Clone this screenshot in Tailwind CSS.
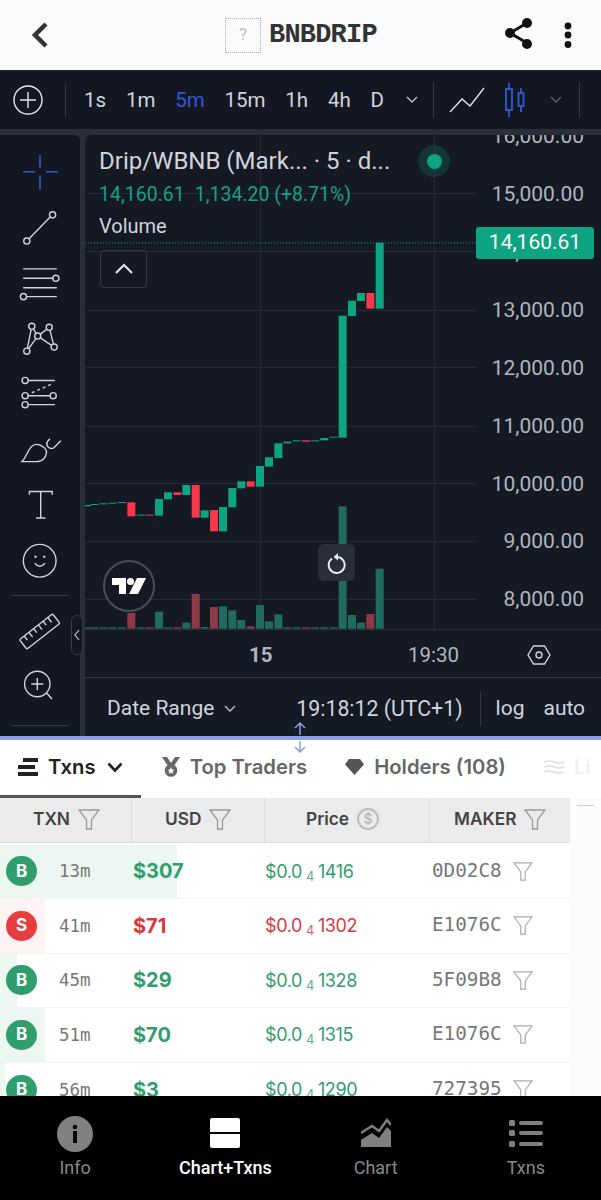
<!DOCTYPE html>
<html lang="en">
<head>
<meta charset="UTF-8">
<title>BNBDRIP</title>
<script src="https://cdn.jsdelivr.net/npm/@tailwindcss/browser@4"></script>
</head>
<body class="bg-white">
<div class="relative flex h-[1200px] w-[601px] flex-col overflow-hidden font-['Roboto',sans-serif]">

  <!-- Header -->
  <header class="flex h-[71px] shrink-0 items-center border-b border-[#222] bg-[#fbfbfb]">
    <svg class="ml-[30px]" width="20" height="30" viewBox="0 0 20 30" fill="none" stroke="#333" stroke-width="4.5" stroke-linejoin="miter"><path d="M16 4 L5 15 L16 26"/></svg>
    <div class="ml-[175px] flex h-[35px] w-[36px] items-center justify-center border border-dotted border-[#aaa] text-[17px] text-[#bbb]">?</div>
    <div class="ml-[8px] w-[108px] font-['Liberation_Mono',monospace] text-[27px] font-bold tracking-[-0.8px] text-[#333]">BNBDRIP</div>
    <svg class="ml-[126px]" width="34" height="36" viewBox="0 0 34 36" fill="#111" stroke="#111" stroke-width="3"><path d="M24 6 L7 16 L24 26" fill="none"/><circle cx="24" cy="6" r="3.5"/><circle cx="7" cy="16" r="3.5"/><circle cx="24" cy="27" r="3.5"/></svg>
    <svg class="ml-[26px]" width="10" height="30" viewBox="0 0 10 30" fill="#111"><circle cx="5" cy="6" r="3.4"/><circle cx="5" cy="15" r="3.4"/><circle cx="5" cy="24.5" r="3.4"/></svg>
  </header>

  <!-- Chart toolbar -->
  <div class="flex h-[58px] shrink-0 items-center bg-[#131722] text-[20.5px] text-[#d1d4dc]">
    <svg class="ml-[13px]" width="30" height="30" viewBox="0 0 30 30" fill="none" stroke="#e6e8ee" stroke-width="1.4"><circle cx="15" cy="15" r="14"/><path d="M15 7 V23 M7 15 H23"/></svg>
    <div class="ml-[22px] mr-[18px] h-[33px] w-px bg-[#363a45]"></div>
    <div class="flex items-center gap-[19.8px]">
      <span>1s</span><span>1m</span><span class="text-[#3058d6]">5m</span><span>15m</span><span>1h</span><span>4h</span><span>D</span>
    </div>
    <svg class="ml-[21px]" width="14" height="10" viewBox="0 0 14 10" fill="none" stroke="#c4c7d0" stroke-width="1.3"><path d="M2 2 L7 7 L12 2"/></svg>
    <div class="ml-[14px] h-[36px] w-px bg-[#363a45]"></div>
    <svg class="ml-[15px]" width="36" height="28" viewBox="0 0 36 28" fill="none" stroke="#e6e8ee" stroke-width="1.3"><path d="M1 26 L13 13 L21 20 L35 2"/></svg>
    <svg class="ml-[19px]" width="22" height="36" viewBox="0 0 22 36" fill="none" stroke="#2f5bd8" stroke-width="1.8"><rect x="2" y="7" width="6" height="21"/><path d="M5 1 V7 M5 28 V35"/><rect x="14.5" y="11" width="5" height="13"/><path d="M17 6 V11 M17 24 V30"/></svg>
    <svg class="ml-[23px]" width="14" height="10" viewBox="0 0 14 10" fill="none" stroke="#5e626d" stroke-width="1.3"><path d="M2 2 L7 7 L12 2"/></svg>
    <div class="ml-[16px] h-[36px] w-px bg-[#363a45]"></div>
  </div>

  <!-- Tools + chart -->
  <div class="relative flex h-[607px] shrink-0 bg-[#2a2e39] pt-[6px]">
    <div class="flex w-[80px] flex-col items-center rounded-tr-[6px] bg-[#131722] pt-[9px]">
      <svg class="h-[55.5px] w-[48px] shrink-0" viewBox="0 0 48 56" fill="none" stroke="#2f5bd8" stroke-width="1.6"><path d="M24 11 V24 M24 32 V46 M7 28 H19 M30 28 H42"/></svg>
      <svg class="h-[55.5px] w-[48px] shrink-0" viewBox="0 0 48 56" fill="none" stroke="#d1d4dc" stroke-width="1.4"><path d="M34.5 17 L13 39"/><circle cx="36.7" cy="15" r="3.1"/><circle cx="10.7" cy="41.4" r="3.1"/></svg>
      <svg class="h-[55.5px] w-[48px] shrink-0" viewBox="0 0 48 56" fill="none" stroke="#d1d4dc" stroke-width="1.4"><path d="M7 14 H41 M7 23.5 H37 M7 33 H41 M10.5 42 H41"/><circle cx="40" cy="23.5" r="3.1"/><circle cx="7.3" cy="42" r="3.1"/></svg>
      <svg class="h-[55.5px] w-[48px] shrink-0" viewBox="0 0 48 56" fill="none" stroke="#d1d4dc" stroke-width="1.4"><path d="M15.7 15.4 L10.7 40.6 L21.7 25.3 L15.7 15.4 M21.7 25.3 L33.3 16.5 L38.3 36.4 L21.7 25.3"/><circle cx="15.7" cy="15.4" r="3.1" fill="#131722"/><circle cx="33.3" cy="16.5" r="3.1" fill="#131722"/><circle cx="21.7" cy="25.3" r="3.1" fill="#131722"/><circle cx="10.7" cy="40.6" r="3.1" fill="#131722"/><circle cx="38.3" cy="36.4" r="3.1" fill="#131722"/></svg>
      <svg class="h-[55.5px] w-[48px] shrink-0" viewBox="0 0 48 56" fill="none" stroke="#d1d4dc" stroke-width="1.4"><path d="M12 14.6 H39 M12 30 H34 M12 39 H39"/><path d="M15.7 27 L37.3 17.6" stroke-dasharray="3 3"/><circle cx="9" cy="14.6" r="3.1"/><circle cx="9" cy="30" r="3.1"/><circle cx="37.3" cy="30" r="3.1"/><circle cx="9" cy="39" r="3.1"/></svg>
      <svg class="h-[55.5px] w-[48px] shrink-0" viewBox="0 0 48 56" fill="none" stroke="#d1d4dc" stroke-width="1.4"><path d="M5.7 40 H20 C27 40 31 35 30.5 29 C27 23 20 21 16.5 24 C11 28 11 35 5.7 40 Z"/><path d="M34 17 Q29 21 32 25 Q35 28 38 26 L45 19"/></svg>
      <svg class="h-[55.5px] w-[48px] shrink-0" viewBox="0 0 48 56" fill="none" stroke="#d1d4dc" stroke-width="1.4"><path d="M13.3 18 V14.6 H36.3 V18 M24.7 14.6 V41.4 M20 41.4 H29.5"/></svg>
      <svg class="h-[55.5px] w-[48px] shrink-0" viewBox="0 0 48 56" fill="none" stroke="#d1d4dc" stroke-width="1.4"><circle cx="23.7" cy="28" r="16.5"/><path d="M18.7 30.5 Q23.7 36.5 29 30.5"/><circle cx="19.5" cy="24" r="1.2" fill="#d1d4dc" stroke="none"/><circle cx="28.3" cy="24" r="1.2" fill="#d1d4dc" stroke="none"/></svg>
      <div class="mt-[7px] h-px w-[56px] bg-[#363a45]"></div>
      <svg class="mt-[9px] h-[53px] w-[48px] shrink-0" viewBox="0 0 48 53" fill="none" stroke="#d1d4dc" stroke-width="1.4"><g transform="translate(23.7 26.5) rotate(-38)"><rect x="-21" y="-6" width="42" height="12" rx="1.5"/><path d="M-15 -6 V-1 M-9 -6 V0 M-3 -6 V-1 M3 -6 V0 M9 -6 V-1 M15 -6 V0"/></g></svg>
      <svg class="h-[53px] w-[48px] shrink-0" viewBox="0 0 48 53" fill="none" stroke="#d1d4dc" stroke-width="1.4"><circle cx="21.3" cy="26" r="12.7"/><path d="M21.3 20 V32 M15.3 26 H27.3 M30.5 35 L36 41"/></svg>
      <div class="mt-[14px] h-px w-[56px] bg-[#363a45]"></div>
    </div>

    <div class="ml-[5px] flex w-[516px] flex-col rounded-tl-[6px] bg-[#151924]">
      <div class="relative flex h-[495px] shrink-0 overflow-hidden border-b border-[#2a2e39]">
        <svg id="plot" class="h-[495px] w-[391px] shrink-0" viewBox="85 135 391 495"></svg>
        <div class="flex w-[125px] shrink-0 flex-col items-end pr-[17px] text-[21px] text-[#b2b5be]">
          <div class="-mt-[27px] flex h-[58px] items-center">16,000.00</div>
          <div class="flex h-[58px] items-center">15,000.00</div>
          <div class="flex h-[58px] items-center">14,000.00</div>
          <div class="flex h-[58px] items-center">13,000.00</div>
          <div class="flex h-[58px] items-center">12,000.00</div>
          <div class="flex h-[58px] items-center">11,000.00</div>
          <div class="flex h-[58px] items-center">10,000.00</div>
          <div class="flex h-[58px] items-center">9,000.00</div>
          <div class="flex h-[58px] items-center">8,000.00</div>
        </div>

        <!-- Legend and overlays on the chart -->
        <div class="absolute left-[14px] top-[11px] w-[300px] text-[#d1d4dc]">
          <div class="text-[24px] leading-[30px]">Drip/WBNB (Mark... · 5 · d...</div>
          <div class="mt-[6px] flex gap-[10px] text-[19.5px] leading-[26px] text-[#17a184]"><span>14,160.61</span><span>1,134.20 (+8.71%)</span></div>
          <div class="mt-[5px] text-[20px] leading-[26px]">Volume</div>
        </div>
        <div class="absolute left-[333px] top-[10px] flex h-[32px] w-[32px] items-center justify-center rounded-full bg-[#0ca481]/20"><div class="h-[15px] w-[15px] rounded-full bg-[#0ca481]"></div></div>
        <div class="absolute left-[391px] top-[92px] flex h-[32px] w-[118px] items-center justify-center rounded-[3px] bg-[#0ca481] text-[21px] text-white">14,160.61</div>
        <div class="absolute left-[15px] top-[115px] flex h-[38px] w-[47px] items-center justify-center rounded-[4px] border border-[#363a45]">
          <svg width="20" height="12" viewBox="0 0 20 12" fill="none" stroke="#e6e8ee" stroke-width="2"><path d="M2 10 L10 2 L18 10"/></svg>
        </div>
        <div class="absolute left-[18px] top-[425px] flex h-[52px] w-[52px] items-center justify-center rounded-full border-2 border-[#4a4e58] bg-[#151924]">
          <svg width="34" height="18" viewBox="0 0 34 18" fill="#fff"><path d="M0 1 H14 V17 H7 V8 H0 Z"/><circle cx="18.5" cy="4.5" r="3.5"/><path d="M25 1 H34 L26 17 H17 Z"/></svg>
        </div>
        <div class="absolute left-[233px] top-[409px] flex h-[37px] w-[37px] items-center justify-center rounded-[6px] bg-[#2a2e39]">
          <svg width="22" height="22" viewBox="0 0 22 22" fill="none" stroke="#e6e8ee" stroke-width="2"><path d="M6 6.5 A8 8 0 1 0 11 5 "/><path d="M12 1 L7.5 5 L12 8.5" fill="#e6e8ee" stroke="none"/></svg>
        </div>
      </div>

      <!-- Time axis -->
      <div class="flex h-[48px] shrink-0 items-center border-b border-[#363a45] pl-[164px] pt-[3px] text-[20.5px] text-[#b2b5be]">
        <span class="w-[23px] font-bold">15</span>
        <span class="ml-[136px]">19:30</span>
        <svg class="ml-[68px]" width="24" height="24" viewBox="0 0 24 24" fill="none" stroke="#d1d4dc" stroke-width="1.4"><path d="M6.5 3 H17.5 L23 12 L17.5 21 H6.5 L1 12 Z"/><circle cx="12" cy="12" r="3"/></svg>
      </div>

      <!-- Date range bar -->
      <div class="flex flex-1 items-center pl-[22px] pt-[3px] text-[21px] text-[#d1d4dc]">
        <span>Date Range</span>
        <svg class="ml-[9px]" width="14" height="10" viewBox="0 0 14 10" fill="none" stroke="#c4c7d0" stroke-width="1.3"><path d="M2 2 L7 7 L12 2"/></svg>
        <span class="ml-[59px] text-[21.3px]">19:18:12 (UTC+1)</span>
        <div class="ml-[17px] h-[34px] w-px bg-[#363a45]"></div>
        <span class="ml-[15px]">log</span>
        <span class="ml-[19px]">auto</span>
      </div>
    </div>

    <!-- Collapse handle for the tools -->
    <div class="absolute left-[71px] top-[486px] flex h-[40px] w-[12px] items-center justify-center rounded-[6px] border border-[#363a45] bg-[#131722]">
      <svg width="6" height="12" viewBox="0 0 6 12" fill="none" stroke="#c4c7d0" stroke-width="1.2"><path d="M5 1 L1 6 L5 11"/></svg>
    </div>
  </div>

  <!-- Resize bar -->
  <div class="h-[4px] shrink-0 bg-[#8c9fe6]"></div>
  <svg class="absolute left-[293px] top-[722px] z-10" width="14" height="32" viewBox="0 0 14 32" fill="none" stroke="#8c9fe6" stroke-width="1.5"><path d="M7 1 V13 M2 6 L7 1 L12 6 M7 19 V30 M2 25 L7 30 L12 25"/></svg>

  <!-- Tabs -->
  <div class="relative flex h-[58px] shrink-0 items-center bg-white pb-[4px] font-['Inter',sans-serif] text-[20.3px] font-semibold">
    <div class="absolute bottom-0 left-0 h-[3px] w-[141px] bg-[#555]"></div>
    <svg class="ml-[18px]" width="20" height="18" viewBox="0 0 20 18" fill="#222"><rect x="5" y="0" width="15" height="4"/><rect x="0" y="7" width="17" height="4"/><rect x="0" y="14" width="20" height="4"/></svg>
    <span class="ml-[10px] text-[#222]">Txns</span>
    <svg class="ml-[11px]" width="16" height="11" viewBox="0 0 16 11" fill="none" stroke="#222" stroke-width="2.6"><path d="M1.5 1.5 L8 8.5 L14.5 1.5"/></svg>
    <svg class="ml-[38px]" width="20" height="20" viewBox="0 0 20 20"><path d="M1 0 H6 L10 6 L14 0 H19 L13 9 H7 Z" fill="#666"/><circle cx="10" cy="13.5" r="6.3" fill="#666"/><path d="M10 10 L11 12.6 L13.4 12.8 L11.6 14.4 L12.2 17 L10 15.6 L7.8 17 L8.4 14.4 L6.6 12.8 L9 12.6 Z" fill="#fff"/></svg>
    <span class="ml-[9px] text-[#666]">Top Traders</span>
    <svg class="ml-[38px]" width="19" height="16" viewBox="0 0 19 16" fill="#555"><path d="M4 0 H15 L19 5.5 L9.5 16 L0 5.5 Z"/></svg>
    <span class="ml-[10px] text-[#666]">Holders (108)</span>
    <svg class="ml-[38px]" width="20" height="15" viewBox="0 0 20 15" fill="none" stroke="#ddd" stroke-width="1.5"><path d="M0 2 Q5 0 10 2 T20 2 M0 7 Q5 5 10 7 T20 7 M0 12 Q5 10 10 12 T20 12"/></svg>
    <span class="ml-[10px] text-[#f0f0f0]">Li</span>
  </div>

  <!-- Transactions table -->
  <div class="flex min-h-0 flex-1 overflow-hidden bg-[#fbfbfb]">
    <div class="w-[570px] shrink-0 bg-white">
      <div class="mb-[1.5px] flex h-[45px] items-center border-b border-[#ddd] bg-[#ebebeb] font-['Inter',sans-serif] text-[17.3px] font-semibold text-[#444]">
        <div class="flex h-full w-[132px] items-center border-r border-[#ddd] pb-[2px] pl-[33px]"><span>TXN</span><svg class="ml-[8px]" width="22" height="21" viewBox="0 0 22 21" fill="none" stroke="#999" stroke-width="1.3"><path d="M1 1 H21 L13.5 11 V20 H8.5 V11 Z"/></svg></div>
        <div class="flex h-full w-[133px] items-center border-r border-[#ddd] pb-[2px] pl-[33px]"><span>USD</span><svg class="ml-[8px]" width="22" height="21" viewBox="0 0 22 21" fill="none" stroke="#999" stroke-width="1.3"><path d="M1 1 H21 L13.5 11 V20 H8.5 V11 Z"/></svg></div>
        <div class="flex h-full w-[165px] items-center border-r border-[#ddd] pb-[2px] pl-[41px]"><span>Price</span><svg class="ml-[8px]" width="22" height="22" viewBox="0 0 22 22" fill="none" stroke="#bbb" stroke-width="2"><circle cx="11" cy="11" r="10"/><text x="11" y="16" font-size="14" text-anchor="middle" fill="#bbb" stroke="none" font-family="Inter">$</text></svg></div>
        <div class="flex h-full flex-1 items-center pb-[2px] pl-[24px]"><span>MAKER</span><svg class="ml-[8px]" width="22" height="21" viewBox="0 0 22 21" fill="none" stroke="#999" stroke-width="1.3"><path d="M1 1 H21 L13.5 11 V20 H8.5 V11 Z"/></svg></div>
      </div>

      <div class="relative flex h-[54.5px] items-center border-b border-[#f4f4f4]">
        <div class="absolute inset-y-0 left-0 w-[177px] bg-[#edf7f2]"></div>
        <div class="relative ml-[6px] flex h-[30px] w-[31px] items-center justify-center rounded-full bg-[#2f9e6c] font-['Inter',sans-serif] text-[17px] font-bold text-white">B</div>
        <div class="relative ml-[22px] w-[74px] font-['DejaVu_Sans_Mono',monospace] text-[17.5px] text-[#777]">13m</div>
        <div class="relative w-[132px] font-['Inter',sans-serif] text-[20px] font-bold text-[#2f9e6c]">$307</div>
        <div class="relative flex w-[167px] items-baseline font-['Inter',sans-serif] text-[18px] tracking-[-0.4px] text-[#2f9e6c]"><span>$0.0</span><span class="mx-[4px] translate-y-[3px] text-[13px] opacity-80">4</span><span>1416</span></div>
        <div class="relative w-[81px] font-['DejaVu_Sans_Mono',monospace] text-[19.3px] text-[#777]">0D02C8</div>
        <svg class="relative" width="20" height="19" viewBox="0 0 22 21" fill="none" stroke="#aaa" stroke-width="1.3"><path d="M1 1 H21 L13.5 11 V20 H8.5 V11 Z"/></svg>
      </div>
      <div class="relative flex h-[54.5px] items-center border-b border-[#f4f4f4]">
        <div class="absolute inset-y-0 left-0 w-[45px] bg-[#fdf3f2]"></div>
        <div class="relative ml-[6px] flex h-[30px] w-[31px] items-center justify-center rounded-full bg-[#e53e3e] font-['Inter',sans-serif] text-[17px] font-bold text-white">S</div>
        <div class="relative ml-[22px] w-[74px] font-['DejaVu_Sans_Mono',monospace] text-[17.5px] text-[#777]">41m</div>
        <div class="relative w-[132px] font-['Inter',sans-serif] text-[20px] font-bold text-[#d9383e]">$71</div>
        <div class="relative flex w-[167px] items-baseline font-['Inter',sans-serif] text-[18px] tracking-[-0.4px] text-[#d9383e]"><span>$0.0</span><span class="mx-[4px] translate-y-[3px] text-[13px] opacity-80">4</span><span>1302</span></div>
        <div class="relative w-[81px] font-['DejaVu_Sans_Mono',monospace] text-[19.3px] text-[#777]">E1076C</div>
        <svg class="relative" width="20" height="19" viewBox="0 0 22 21" fill="none" stroke="#aaa" stroke-width="1.3"><path d="M1 1 H21 L13.5 11 V20 H8.5 V11 Z"/></svg>
      </div>
      <div class="relative flex h-[54.5px] items-center border-b border-[#f4f4f4]">
        <div class="absolute inset-y-0 left-0 w-[17px] bg-[#edf7f2]"></div>
        <div class="relative ml-[6px] flex h-[30px] w-[31px] items-center justify-center rounded-full bg-[#2f9e6c] font-['Inter',sans-serif] text-[17px] font-bold text-white">B</div>
        <div class="relative ml-[22px] w-[74px] font-['DejaVu_Sans_Mono',monospace] text-[17.5px] text-[#777]">45m</div>
        <div class="relative w-[132px] font-['Inter',sans-serif] text-[20px] font-bold text-[#2f9e6c]">$29</div>
        <div class="relative flex w-[167px] items-baseline font-['Inter',sans-serif] text-[18px] tracking-[-0.4px] text-[#2f9e6c]"><span>$0.0</span><span class="mx-[4px] translate-y-[3px] text-[13px] opacity-80">4</span><span>1328</span></div>
        <div class="relative w-[81px] font-['DejaVu_Sans_Mono',monospace] text-[19.3px] text-[#777]">5F09B8</div>
        <svg class="relative" width="20" height="19" viewBox="0 0 22 21" fill="none" stroke="#aaa" stroke-width="1.3"><path d="M1 1 H21 L13.5 11 V20 H8.5 V11 Z"/></svg>
      </div>
      <div class="relative flex h-[54.5px] items-center border-b border-[#f4f4f4]">
        <div class="absolute inset-y-0 left-0 w-[45px] bg-[#edf7f2]"></div>
        <div class="relative ml-[6px] flex h-[30px] w-[31px] items-center justify-center rounded-full bg-[#2f9e6c] font-['Inter',sans-serif] text-[17px] font-bold text-white">B</div>
        <div class="relative ml-[22px] w-[74px] font-['DejaVu_Sans_Mono',monospace] text-[17.5px] text-[#777]">51m</div>
        <div class="relative w-[132px] font-['Inter',sans-serif] text-[20px] font-bold text-[#2f9e6c]">$70</div>
        <div class="relative flex w-[167px] items-baseline font-['Inter',sans-serif] text-[18px] tracking-[-0.4px] text-[#2f9e6c]"><span>$0.0</span><span class="mx-[4px] translate-y-[3px] text-[13px] opacity-80">4</span><span>1315</span></div>
        <div class="relative w-[81px] font-['DejaVu_Sans_Mono',monospace] text-[19.3px] text-[#777]">E1076C</div>
        <svg class="relative" width="20" height="19" viewBox="0 0 22 21" fill="none" stroke="#aaa" stroke-width="1.3"><path d="M1 1 H21 L13.5 11 V20 H8.5 V11 Z"/></svg>
      </div>
      <div class="relative flex h-[54.5px] items-center">
        <div class="absolute inset-y-0 left-0 w-[5px] bg-[#edf7f2]"></div>
        <div class="relative ml-[6px] flex h-[30px] w-[31px] items-center justify-center rounded-full bg-[#2f9e6c] font-['Inter',sans-serif] text-[17px] font-bold text-white">B</div>
        <div class="relative ml-[22px] w-[74px] font-['DejaVu_Sans_Mono',monospace] text-[17.5px] text-[#777]">56m</div>
        <div class="relative w-[132px] font-['Inter',sans-serif] text-[20px] font-bold text-[#2f9e6c]">$3</div>
        <div class="relative flex w-[167px] items-baseline font-['Inter',sans-serif] text-[18px] tracking-[-0.4px] text-[#2f9e6c]"><span>$0.0</span><span class="mx-[4px] translate-y-[3px] text-[13px] opacity-80">4</span><span>1290</span></div>
        <div class="relative w-[81px] font-['DejaVu_Sans_Mono',monospace] text-[19.3px] text-[#777]">727395</div>
        <svg class="relative" width="20" height="19" viewBox="0 0 22 21" fill="none" stroke="#aaa" stroke-width="1.3"><path d="M1 1 H21 L13.5 11 V20 H8.5 V11 Z"/></svg>
      </div>
    </div>
    <div class="ml-[7px] mt-[7px] h-px w-[17px] bg-[#ccc]"></div>
  </div>

  <!-- Bottom navigation -->
  <nav class="grid h-[104px] shrink-0 grid-cols-4 bg-black text-[18px] text-[#888]">
    <div class="flex flex-col items-center pt-[20px]">
      <svg width="36" height="36" viewBox="0 0 36 36"><circle cx="18" cy="18" r="18" fill="#808080"/><circle cx="18" cy="11" r="2.3" fill="#000"/><rect x="16" y="15" width="4" height="12" fill="#000"/></svg>
      <span class="mt-[4px] leading-[24px]">Info</span>
    </div>
    <div class="flex flex-col items-center pt-[22px] font-medium text-white">
      <svg width="30" height="30" viewBox="0 0 30 30" fill="#fff"><path d="M2 0 H28 A2 2 0 0 1 30 2 V14 H0 V2 A2 2 0 0 1 2 0 Z"/><path d="M0 16 H30 V28 A2 2 0 0 1 28 30 H2 A2 2 0 0 1 0 28 Z"/></svg>
      <span class="mt-[8px] leading-[24px]">Chart+Txns</span>
    </div>
    <div class="flex flex-col items-center pt-[22px]">
      <svg width="30" height="30" viewBox="0 0 30 30" fill="#808080"><path d="M0 29 V22 L11 15 L18 20 L26 9 L30 13 V29 Z"/><path d="M0 15 L11 8 L18 13 L26 2 L30 7" fill="none" stroke="#808080" stroke-width="2.4"/></svg>
      <span class="mt-[8px] leading-[24px]">Chart</span>
    </div>
    <div class="flex flex-col items-center pt-[22px]">
      <svg width="34" height="30" viewBox="0 0 34 30" fill="#808080"><rect x="0" y="2" width="6" height="6" rx="1.5"/><rect x="0" y="12" width="6" height="6" rx="1.5"/><rect x="0" y="23" width="6" height="6" rx="1.5"/><rect x="10" y="3" width="24" height="4" rx="2"/><rect x="10" y="13" width="24" height="4" rx="2"/><rect x="10" y="24" width="24" height="4" rx="2"/></svg>
      <span class="mt-[8px] leading-[24px]">Txns</span>
    </div>
  </nav>
</div>

<script>
// candle + volume data, in px of the plot (x = centre, open/close as y)
const GREEN = '#0ca481', RED = '#f7374b';
const candles = [
  [20,825,829,'g'],[43,822,825,'g'],[71,820,823,'g'],[98,818,821,'g'],[126,816,819,'g'],
  [154,817,859,'r'],[182,854,857,'g'],[209,854,857,'r'],[237,807,857,'g'],[264,787,808,'g'],
  [292,787,795,'r'],[319,765,795,'g'],[347,765,863,'r'],[374,841,863,'g'],[402,840,904,'r'],
  [429,831,904,'g'],[457,774,832,'g'],[484,754,775,'g'],[512,754,770,'r'],[540,708,770,'g'],
  [567,682,710,'g'],[595,640,684,'g'],[622,635,640,'g'],[650,631,634,'g'],[678,631,635,'r'],
  [705,631,634,'g'],[733,624,631,'g'],[761,620,623,'g'],[788,257,623,'g'],[816,212,258,'g'],
  [843,189,213,'g'],[871,189,236,'r'],[899,38,236,'g']
];
const volumes = [
  [20,1192,'g'],[43,1192,'g'],[71,1192,'g'],[98,1192,'g'],[126,1192,'g'],
  [154,1149,'r'],[182,1192,'g'],[209,1192,'r'],[237,1145,'g'],[264,1192,'g'],[292,1192,'r'],
  [319,1178,'g'],[347,1092,'r'],[374,1191,'g'],[402,1131,'r'],[429,1129,'g'],[457,1141,'g'],
  [484,1170,'g'],[512,1189,'r'],[540,1125,'g'],[567,1174,'g'],[595,1153,'g'],[622,1192,'g'],
  [650,1192,'g'],[678,1192,'r'],[705,1192,'g'],[733,1192,'g'],[761,1192,'g'],[788,829,'g'],
  [816,1155,'g'],[843,1178,'g'],[871,1152,'r'],[899,1016,'g']
];
let out = '';
// grid
for (const y of [193,251,310,367,426,483,541,599]) out += `<rect x="85" y="${y}" width="391" height="1" fill="#262a35"/>`;
for (const x of [260,434]) out += `<rect x="${x}" y="135" width="1" height="495" fill="#262a35"/>`;
out += '<g transform="translate(80 230) scale(0.33333)">';
for (const [x,top,c] of volumes) out += `<rect x="${x-12}" y="${top}" width="24" height="${1196-top}" fill="${c==='g'?'#1f6b60':'#8c3a46'}"/>`;
for (const [x,a,b,c] of candles) out += `<rect x="${x-12}" y="${a}" width="24" height="${b-a}" fill="${c==='g'?GREEN:RED}"/>`;
out += '</g>';
out += `<path d="M85 243 H476" stroke="${GREEN}" stroke-width="1" stroke-dasharray="1 2"/>`;
document.getElementById('plot').innerHTML = out;
</script>
</body>
</html>
